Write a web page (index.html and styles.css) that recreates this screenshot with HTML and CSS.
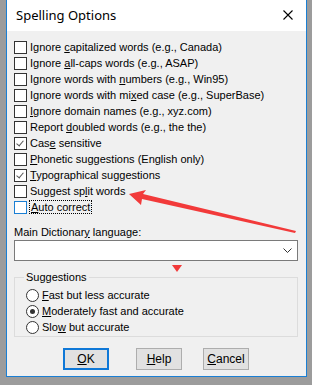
FILE: index.html
```html
<!DOCTYPE html>
<html lang="en">
<head>
    <meta charset="UTF-8">
    <title>Spelling Options</title>
    <link rel="stylesheet" href="styles.css">
</head>
<body>
    <div class="window">
        <div class="titlebar">
            <span class="title">Spelling Options</span>
            <svg class="close" width="10" height="10" viewBox="0 0 10 10">
                <path d="M0.5 0.5 L9.5 9.5 M9.5 0.5 L0.5 9.5" stroke="#000" stroke-width="1.1"/>
            </svg>
        </div>

        <div class="dialog">
            <ul class="checks">
                <li><span class="box"></span><span>Ignore <u>c</u>apitalized words (e.g., Canada)</span></li>
                <li><span class="box"></span><span>Ignore <u>a</u>ll-caps words (e.g., ASAP)</span></li>
                <li><span class="box"></span><span>Ignore words with <u>n</u>umbers (e.g., Win95)</span></li>
                <li><span class="box"></span><span>Ignore words with mi<u>x</u>ed case (e.g., SuperBase)</span></li>
                <li><span class="box"></span><span><u>I</u>gnore domain names (e.g., xyz.com)</span></li>
                <li><span class="box"></span><span>Report <u>d</u>oubled words (e.g., the the)</span></li>
                <li><span class="box checked"></span><span>Cas<u>e</u> sensitive</span></li>
                <li><span class="box"></span><span><u>P</u>honetic suggestions (English only)</span></li>
                <li><span class="box checked"></span><span><u>T</u>ypographical suggestions</span></li>
                <li><span class="box"></span><span>Suggest sp<u>l</u>it words</span></li>
                <li><span class="box focus"></span><span class="focus-label"><u>A</u>uto correct</span></li>
            </ul>

            <div class="lang">
                <div class="lang-label">Main Dictionar<u>y</u> language:</div>
                <div class="select">
                    <svg width="9" height="6" viewBox="0 0 9 6">
                        <path d="M0.5 0.5 L4.5 4.5 L8.5 0.5" fill="none" stroke="#333" stroke-width="1"/>
                    </svg>
                </div>
            </div>

            <fieldset class="group">
                <legend>Suggestions</legend>
                <div class="radio"><span class="dot"></span><span><u>F</u>ast but less accurate</span></div>
                <div class="radio"><span class="dot on"></span><span><u>M</u>oderately fast and accurate</span></div>
                <div class="radio"><span class="dot"></span><span>Slo<u>w</u> but accurate</span></div>
            </fieldset>

            <div class="buttons">
                <div class="btn default"><span><u>O</u>K</span></div>
                <div class="btn help"><span><u>H</u>elp</span></div>
                <div class="btn"><span><u>C</u>ancel</span></div>
            </div>
        </div>

        <!-- red annotation marks -->
        <svg class="marks" width="300" height="300" viewBox="0 0 300 300">
            <polygon points="128,194 145,190 142,194 295,231 294,233 141,199 140,205" fill="#f23a3a"/>
            <polygon points="171,265 181,265 176,272" fill="#f23a3a"/>
        </svg>
    </div>
</body>
</html>
```

FILE: styles.css
```css
body {
    margin: 0;
    padding: 0;
    background-color: #9c9c9c;
    font-family: "Liberation Sans", Arial, sans-serif;
    font-size: 11px;
    color: #000;
}

.window {
    position: relative;
    width: 299px;
    height: 376px;
    margin-left: 6px;
    border: 1px solid #1a7fd4;
    border-top: none;
    background-color: #f0f0f0;
    display: flex;
    flex-direction: column;
}

.titlebar {
    height: 31px;
    background-color: #fff;
    display: flex;
    align-items: center;
    justify-content: space-between;
    padding: 0 13px 0 9px;
}

.title {
    font-family: "Noto Sans", sans-serif;
    font-size: 13px;
    padding-bottom: 2px;
}

.close {
    margin-bottom: 2px;
}

.dialog {
    padding: 8px 8px 0 7px;
}

.checks {
    list-style: none;
    margin: 0;
    padding: 0;
}

.checks li {
    height: 16px;
    display: flex;
    align-items: center;
    white-space: nowrap;
}

.box {
    width: 11px;
    height: 11px;
    border: 1px solid #333;
    background-color: #fff;
    margin-right: 3px;
    position: relative;
    flex: none;
}

.box.checked::after {
    content: "";
    position: absolute;
    left: 3px;
    top: 1px;
    width: 3px;
    height: 6px;
    border: solid #555;
    border-width: 0 1px 1px 0;
    transform: rotate(40deg);
}

.box.focus {
    border-color: #1a7fd4;
}

.focus-label {
    outline: 1px dotted #000;
    padding: 0 1px;
}

.lang {
    margin-top: 11px;
}

.lang-label {
    height: 14px;
}

.select {
    height: 19px;
    border: 1px solid #7a7a7a;
    background-color: #fff;
    display: flex;
    align-items: center;
    justify-content: flex-end;
    padding-right: 5px;
}

.group {
    margin: 10px 0 0 0;
    padding: 4px 0 1px 11px;
    border: 1px solid #dcdcdc;
    min-width: 0;
}

.group legend {
    padding: 0 2px;
    margin-left: -2px;
}

.radio {
    height: 16px;
    display: flex;
    align-items: center;
    white-space: nowrap;
}

.dot {
    width: 11px;
    height: 11px;
    border: 1px solid #333;
    border-radius: 50%;
    background-color: #fff;
    margin-right: 3px;
    position: relative;
    flex: none;
}

.dot.on::after {
    content: "";
    position: absolute;
    left: 3px;
    top: 3px;
    width: 5px;
    height: 5px;
    border-radius: 50%;
    background-color: #333;
}

.buttons {
    display: flex;
    gap: 21px;
    margin-top: 11px;
    padding-left: 49px;
}

.btn {
    width: 44px;
    height: 20px;
    border: 1px solid #adadad;
    background-color: #e1e1e1;
    display: flex;
    align-items: center;
    justify-content: center;
    font-size: 12px;
}

.btn.help {
    margin-left: 6px;
}

.btn.default {
    border: 2px solid #0f78d7;
    width: 42px;
    height: 18px;
}

.marks {
    position: absolute;
    left: -6px;
    top: 0;
    pointer-events: none;
}
```
